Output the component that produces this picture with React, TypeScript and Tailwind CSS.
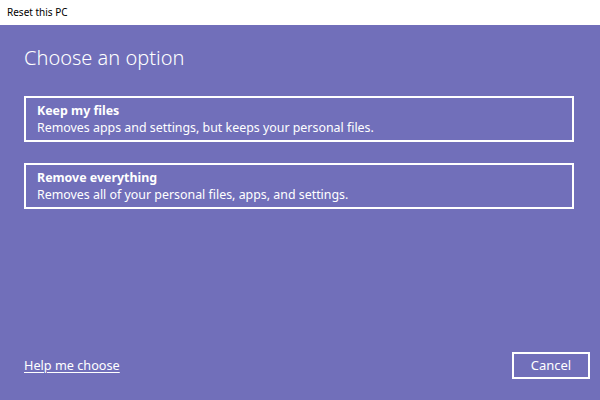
import React from "react";

const options = [
  {
    title: "Keep my files",
    desc: "Removes apps and settings, but keeps your personal files.",
  },
  {
    title: "Remove everything",
    desc: "Removes all of your personal files, apps, and settings.",
  },
];

export default function App() {
  return (
    <div
      className="w-[600px] h-[400px] flex flex-col overflow-hidden"
      style={{ fontFamily: '"Noto Sans", "Open Sans", sans-serif' }}
    >
      <div className="h-[25px] bg-white flex items-center px-[7px] text-[10px] text-black">
        Reset this PC
      </div>
      <div className="flex-1 bg-[#716fba] flex flex-col px-6 text-white">
        <h1 className="mt-[19px] text-[20px] font-light leading-[28px]">
          Choose an option
        </h1>
        <div className="mt-[24px] flex flex-col gap-[21px] w-[550px]">
          {options.map((o) => (
            <button
              key={o.title}
              className="h-[46px] border-2 border-white text-left px-[11px] flex flex-col justify-center"
            >
              <span className="text-[12.4px] font-bold leading-[17px]">
                {o.title}
              </span>
              <span className="text-[12.4px] leading-[17px]">{o.desc}</span>
            </button>
          ))}
        </div>
        <div className="mt-auto mb-[21px] flex items-center justify-between -mr-[14px]">
          <a className="text-[12.7px] underline underline-offset-2">
            Help me choose
          </a>
          <button className="w-[78px] h-[27px] border-2 border-white text-[13px]">
            Cancel
          </button>
        </div>
      </div>
    </div>
  );
}
